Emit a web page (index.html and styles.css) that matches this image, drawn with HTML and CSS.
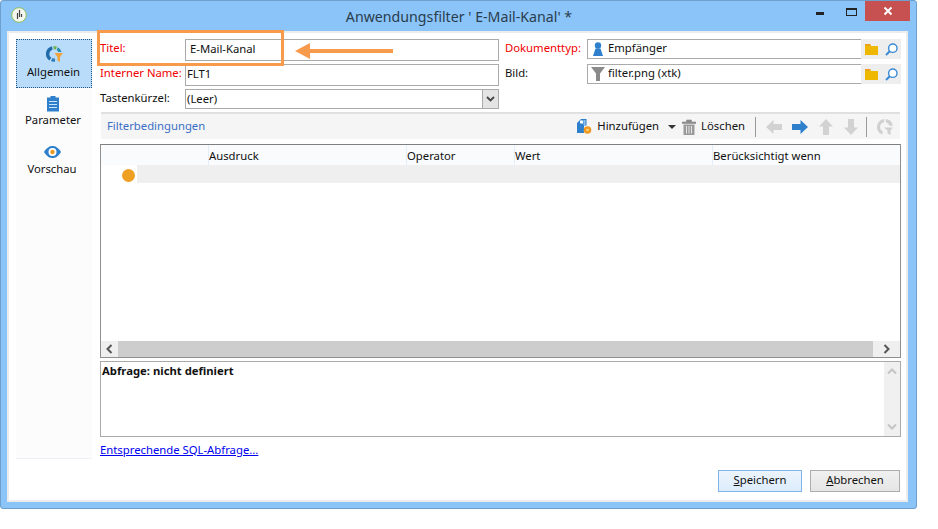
FILE: index.html
```html
<!DOCTYPE html>
<html lang="de">
<head>
<meta charset="utf-8">
<title>Anwendungsfilter</title>
<link rel="stylesheet" href="styles.css">
</head>
<body>
<div class="window">
  <header class="titlebar">
    <svg class="app-icon" width="16" height="16" viewBox="0 0 16 16"><circle cx="8" cy="8" r="7.3" fill="#f4f6f0" stroke="#8fbf5a"/><path d="M8.500 3v7M6.500 6v6M10.500 7v3" stroke="#444" stroke-width="1.200" fill="none"/></svg>
    <h1 class="title">Anwendungsfilter ' E-Mail-Kanal' *</h1>
    <div class="win-controls">
      <span class="win-min"></span>
      <span class="win-max"></span>
      <span class="win-close"><svg width="10" height="10" viewBox="0 0 10 10"><path d="M1.500 1.500l7 7M8.500 1.500l-7 7" stroke="#fff" stroke-width="2"/></svg></span>
    </div>
  </header>
  <div class="client">
    <div class="columns">
      <nav class="sidebar">
        <div class="nav-item active">
          <svg width="18" height="18" viewBox="0 0 18 18"><path d="M7 1.200A8 8 0 0 0 4.500 15.600l1.700-2.800A4.800 4.800 0 0 1 7.600 4.400z" fill="#1f6aa8"/><path d="M6 15.900A8 8 0 0 0 10 16.800V13.600A4.800 4.800 0 0 1 7.400 13z" fill="#2f7fbd"/><path d="M8.500 1A8 8 0 0 1 12 1.700L10.800 4.600A4.800 4.800 0 0 0 8.700 4.200z" fill="#6fb04a"/><path d="M13 2.200A8 8 0 0 1 16.600 7H13.300A4.800 4.800 0 0 0 11.600 5.100z" fill="#2a8fb0"/><path d="M9.500 8h8.500l-3 4v5l-2.500-1.500V12z" fill="#f2a23a"/></svg>
          <span>Allgemein</span>
        </div>
        <div class="nav-item">
          <svg width="14" height="17" viewBox="0 0 14 17"><path d="M1 3h3.500V1.500h5V3H13v14H1z" fill="#2f80cc"/><path d="M3 7h8M3 10h8M3 13h8" stroke="#cfe3f6"/></svg>
          <span>Parameter</span>
        </div>
        <div class="nav-item">
          <svg width="17" height="12" viewBox="0 0 17 12"><path d="M0 6C3 1 6 0 8.500 0S14 1 17 6c-3 5-6 6-8.500 6S3 11 0 6z" fill="#2f80cc"/><circle cx="8.500" cy="6" r="4" fill="#fff"/><circle cx="8.500" cy="6" r="2.200" fill="#ef9a1f"/></svg>
          <span>Vorschau</span>
        </div>
      </nav>
      <main class="main">
        <section class="form">
          <label class="label required">Titel:</label>
          <div class="input tall gap-left">E-Mail-Kanal</div>
          <label class="label required">Dokumenttyp:</label>
          <div class="lookup">
            <div class="input short">
              <svg class="field-icon" width="14" height="14" viewBox="0 0 14 14"><circle cx="7" cy="3.500" r="3.200" fill="#2f80cc"/><path d="M4.500 6.500h5L12 14H2z" fill="#2f80cc"/></svg>
              Empfänger
            </div>
            <div class="lookup-btns">
              <svg width="13" height="11" viewBox="0 0 13 11"><path d="M0 0h5l1 2h7v9H0z" fill="#efb800"/><path d="M0 0h5l1 1.500H0z" fill="#e89a2a"/></svg>
              <svg width="13" height="13" viewBox="0 0 13 13"><circle cx="7.800" cy="5.200" r="4.200" fill="#fff" stroke="#3a8ad6" stroke-width="1.400"/><path d="M4.800 8.200L1 12" stroke="#3a8ad6" stroke-width="2"/></svg>
            </div>
          </div>
          <label class="label required">Interner Name:</label>
          <div class="input tall">FLT1</div>
          <label class="label">Bild:</label>
          <div class="lookup">
            <div class="input short">
              <svg class="field-icon" width="14" height="14" viewBox="0 0 14 14"><path d="M0 0h14L9 6.500V14L5 14V6.500z" fill="#8a8a8a"/></svg>
              filter.png (xtk)
            </div>
            <div class="lookup-btns">
              <svg width="13" height="11" viewBox="0 0 13 11"><path d="M0 0h5l1 2h7v9H0z" fill="#efb800"/><path d="M0 0h5l1 1.500H0z" fill="#e89a2a"/></svg>
              <svg width="13" height="13" viewBox="0 0 13 13"><circle cx="7.800" cy="5.200" r="4.200" fill="#fff" stroke="#3a8ad6" stroke-width="1.400"/><path d="M4.800 8.200L1 12" stroke="#3a8ad6" stroke-width="2"/></svg>
            </div>
          </div>
          <label class="label">Tastenkürzel:</label>
          <div class="input select">
            <span class="select-value">(Leer)</span>
            <span class="select-arrow"><svg width="9" height="6" viewBox="0 0 9 6"><path d="M1 1l3.500 3.500L8 1" stroke="#444" stroke-width="1.800" fill="none"/></svg></span>
          </div>
        </section>

        <section class="toolbar">
          <span class="toolbar-title">Filterbedingungen</span>
          <div class="tools">
            <svg class="t-add" width="15" height="16" viewBox="0 0 15 16"><path d="M0 4L4 0h5.500v6.500H7V14H0z" fill="#2f80cc"/><path d="M3 4.500V1.500H6v3z" fill="#fff"/><path d="M6.500 1h2v5h-2z" fill="#8fc0ea"/><circle cx="10.500" cy="11" r="3.800" fill="#ef9a1f"/><circle cx="10.500" cy="11" r="1.300" fill="#fbd489"/></svg>
            <span class="t-label t-add-label">Hinzufügen</span>
            <span class="caret"></span>
            <svg class="t-trash" width="14" height="16" viewBox="0 0 14 16"><path d="M0 3h14v1.500H0zM4.500 3V1h5v2" fill="#8c8c8c" stroke="#8c8c8c" stroke-width=".6"/><path d="M1.500 5.500h11V16h-11z" fill="#9a9a9a"/><path d="M4.500 7v7.500M7 7v7.500M9.500 7v7.500" stroke="#e4e4e4"/></svg>
            <span class="t-label t-del-label">Löschen</span>
            <span class="sep sep-a"></span>
            <svg class="t-nav first" width="16" height="14" viewBox="0 0 16 14"><path d="M7.500 0v4H16v6H7.500v4L0 7z" fill="#d2d2d2"/></svg>
            <svg class="t-nav" width="16" height="14" viewBox="0 0 16 14"><path d="M8.500 0v4H0v6h8.500v4L16 7z" fill="#2f80cc"/></svg>
            <svg class="t-nav up" width="14" height="16" viewBox="0 0 14 16"><path d="M0 7.500L7 0l7 7.500h-4V16H4V7.500z" fill="#d2d2d2"/></svg>
            <svg class="t-nav up" width="14" height="16" viewBox="0 0 14 16"><path d="M0 8.500L7 16l7-7.500h-4V0H4v8.500z" fill="#d2d2d2"/></svg>
            <span class="sep sep-b"></span>
            <svg class="t-refresh" width="16" height="16" viewBox="0 0 16 16"><path d="M7.200 0a8 8 0 0 0-2 15.500l.8-3.200A4.700 4.700 0 0 1 7.200 3.300z" fill="#d0d0d0"/><path d="M8.800 0A8 8 0 0 1 15.800 6.800H12.500A4.700 4.700 0 0 0 8.800 3.300z" fill="#d0d0d0"/><path d="M7 8.500h9l-2.500 3V16l-3-1.500v-3z" fill="#d0d0d0"/></svg>
          </div>
        </section>

        <section class="table">
          <div class="thead">
            <span class="th"></span>
            <span class="th">Ausdruck</span>
            <span class="th">Operator</span>
            <span class="th">Wert</span>
            <span class="th">Berücksichtigt wenn</span>
          </div>
          <div class="row">
            <span class="row-head"><span class="dot"></span></span>
            <span class="row-fill"></span>
          </div>
          <div class="table-body"></div>
          <div class="hscroll">
            <span class="scroll-btn"><svg width="7" height="10" viewBox="0 0 7 10"><path d="M5.500 1L1.500 5l4 4" stroke="#555" stroke-width="2" fill="none"/></svg></span>
            <span class="scroll-thumb"></span>
            <span class="scroll-btn end"><svg width="7" height="10" viewBox="0 0 7 10"><path d="M1.500 1l4 4-4 4" stroke="#555" stroke-width="2" fill="none"/></svg></span>
          </div>
        </section>

        <section class="query">
          <div class="query-text">Abfrage: nicht definiert</div>
          <div class="vscroll">
            <svg width="10" height="7" viewBox="0 0 10 7"><path d="M1 5.500l4-4 4 4" stroke="#c4c4c4" stroke-width="2" fill="none"/></svg>
            <svg width="10" height="7" viewBox="0 0 10 7"><path d="M1 1.500l4 4 4-4" stroke="#c4c4c4" stroke-width="2" fill="none"/></svg>
          </div>
        </section>

        <a class="sql-link" href="#">Entsprechende SQL-Abfrage...</a>
      </main>
    </div>
    <footer class="actions">
      <button class="btn primary"><u>S</u>peichern</button>
      <button class="btn"><u>A</u>bbrechen</button>
    </footer>
  </div>

  <div class="callout-box"></div>
  <svg class="callout-arrow" width="98" height="20" viewBox="0 0 98 20"><path d="M0 10L15 2v6h83v4H15v6z" fill="#f79a4b"/></svg>
</div>
</body>
</html>
```

FILE: styles.css
```css
* { box-sizing: border-box; }
html, body { margin: 0; padding: 0; background: #fff; }
body {
  width: 938px;
  height: 529px;
  overflow: hidden;
  font-family: "Noto Sans", "Open Sans", sans-serif;
  font-size: 11.3px;
  color: #111;
}
.window {
  position: relative;
  width: 917px;
  height: 509px;
  background: #8ac4f9;
  border: 1px solid #6f9fcc;
  border-radius: 3px;
  display: flex;
  flex-direction: column;
  padding: 0 8px 6px 6px;
}
.titlebar {
  height: 30px;
  flex: none;
  position: relative;
  display: flex;
  align-items: center;
  justify-content: center;
}
.app-icon { position: absolute; left: 4px; top: 6px; }
.title {
  margin: 0 0 0 3px;
  font-size: 14.2px;
  font-weight: 400;
  color: #2b3d4d;
}
.win-controls {
  position: absolute;
  right: -2px;
  top: 0;
  display: flex;
  align-items: flex-start;
}
.win-min { width: 8px; height: 3px; background: #222; margin: 11px 22px 0 0; }
.win-max { width: 11px; height: 8px; border: 1px solid #222; border-top-width: 2px; margin: 7px 8px 0 0; }
.win-close {
  width: 45px; height: 20px; background: #c75050;
  display: flex; align-items: center; justify-content: center;
}
.client {
  flex: 1;
  background: #fff;
  border: 2px solid #ececec;
  display: flex;
  flex-direction: column;
  padding: 6px 6px 0 7px;
}
.columns { display: flex; gap: 8px; height: 420px; flex: none; }

.sidebar {
  width: 76px;
  flex: none;
  background: #fcfcfd;
  border-bottom: 1px solid #eef0f6;
  display: flex;
  flex-direction: column;
}
.nav-item {
  height: 49px;
  display: flex;
  flex-direction: column;
  align-items: center;
  padding: 6px 2px 0 0;
  gap: 0;
}
.nav-item:last-child { padding-right: 4px; }
.nav-item svg { height: 18px; flex: none; }
.nav-item.active {
  background: #b9dcfb;
  border: 1px dotted #23527c;
  padding: 5px 1px 0 0;
  gap: 1px;
}

.main { width: 801px; flex: none; display: flex; flex-direction: column; }

.form {
  display: grid;
  grid-template-columns: 85px 314px 88px 314px;
  grid-auto-rows: 22px;
  row-gap: 3px;
  height: 72px;
}
.label { line-height: 18px; white-space: nowrap; }
.label:nth-child(3), .label:nth-child(7) { padding-left: 6px; }
.required { color: #f00000; }
.input {
  background: #fff;
  border: 1px solid #aaa;
  display: flex;
  align-items: center;
  padding: 0 0 3px 1px;
  white-space: nowrap;
}
.tall { height: 22px; }
.gap-left { padding-left: 4px; }
.short { height: 20px; flex: 1; padding-left: 3px; border-right: 0; }
.field-icon { margin: 0 3px -3px 0; flex: none; }
.lookup { display: flex; height: 20px; }
.lookup-btns {
  width: 40px;
  background: #eee;
  display: flex;
  align-items: center;
  justify-content: center;
  gap: 7px;
}
.select { height: 20px; justify-content: space-between; padding-bottom: 0; }
.select-value { margin-top: -1px; }
.select-arrow {
  width: 16px; height: 18px; background: #e4e4e4; border-left: 1px solid #aaa;
  display: flex; align-items: center; justify-content: center;
}

.toolbar {
  height: 27px;
  flex: none;
  margin: 1px 0 0 1px;
  width: 799px;
  background: #f5f5f5;
  border-top: 2px solid #e0e0e0;
  display: flex;
  align-items: center;
  justify-content: space-between;
  padding: 0 0 0 6px;
}
.toolbar-title { color: #3b6fc4; margin-top: -2px; }
.tools { display: flex; align-items: center; }
.t-label { margin-top: -2px; }
.t-add-label { margin-left: 5px; }
.caret {
  width: 0; height: 0; margin: 0 6px 0 9px;
  border-left: 4px solid transparent; border-right: 4px solid transparent; border-top: 4px solid #333;
}
.t-del-label { margin-left: 5px; }
.sep { width: 1px; height: 20px; background: #999; }
.sep-a { margin: 0 10px; }
.t-nav { margin-right: 10px; }
.t-nav.up { margin-left: 1px; }
.sep-b { margin: 0 10px 0 -2px; }
.t-refresh { margin-right: 7px; }

.table {
  height: 214px;
  flex: none;
  margin-top: 5px;
  border: 1px solid #8f8f8f;
  border-top-color: #7f7f7f;
  display: flex;
  flex-direction: column;
}
.thead {
  height: 20px;
  flex: none;
  display: grid;
  grid-template-columns: 107px 198px 108px 198px 1fr;
  background: #fafbfc;
}
.th { line-height: 21px; border-left: 1px solid #e3eefb; }
.th:first-child { border-left: 0; }
.row { height: 18px; flex: none; display: flex; }
.row-head { width: 36px; flex: none; background: #fff; display: flex; align-items: center; justify-content: flex-end; padding: 2px 2px 0 0; }
.dot { width: 13px; height: 13px; border-radius: 50%; background: #ef9f24; }
.row-fill { flex: 1; background: #efefef; }
.table-body { flex: 1; background: #fff; }
.hscroll { height: 16px; flex: none; display: flex; background: #efefef; }
.scroll-btn { width: 17px; display: flex; align-items: center; justify-content: center; background: #efefef; }
.scroll-btn.end { width: 27px; }
.scroll-thumb { flex: 1; background: #cdcdcd; }

.query {
  height: 76px;
  flex: none;
  margin-top: 3px;
  border: 1px solid #aaa;
  display: flex;
  justify-content: space-between;
}
.query-text { font-weight: 700; padding: 1px 0 0 1px; }
.vscroll {
  width: 16px;
  background: #f0f0f0;
  display: flex;
  flex-direction: column;
  align-items: center;
  justify-content: space-between;
  padding: 6px 0;
}

.sql-link { margin-top: 5px; color: #0000ee; text-decoration: underline; }

.actions {
  display: flex;
  justify-content: flex-end;
  gap: 8px;
  margin-top: 11px;
}
.btn {
  width: 90px;
  height: 22px;
  font: inherit;
  line-height: 18px;
  color: #111;
  padding: 0 0 2px;
  background: linear-gradient(#f0f0f0, #e5e5e5);
  border: 1px solid #adadad;
}
.btn.primary {
  width: 84px;
  background: linear-gradient(#ecf4fc, #dcecfc);
  border-color: #7eb4ea;
}

.callout-box {
  position: absolute;
  left: 96px;
  top: 29px;
  width: 187px;
  height: 36px;
  border: 3px solid #f79a4b;
}
.callout-arrow { position: absolute; left: 294px; top: 40px; }
```
